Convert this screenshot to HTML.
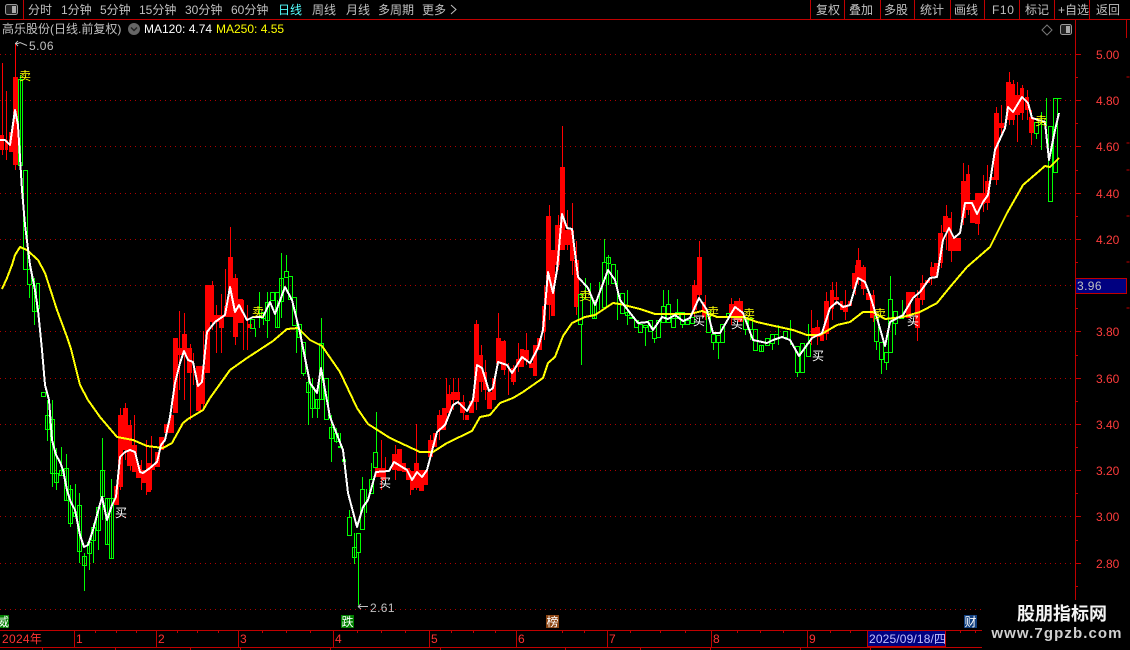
<!DOCTYPE html>
<html><head><meta charset="utf-8"><style>
html,body{margin:0;padding:0;background:#000}
svg{display:block}
text{font-family:"Liberation Sans","WenQuanYi Zen Hei",sans-serif;font-size:12px}
.n{fill:#c0c0c0}
.p{fill:#ff3c3c;font-size:13px}
.m{fill:#ff3232}
</style></head><body>
<svg width="1130" height="650" viewBox="0 0 1130 650" xmlns="http://www.w3.org/2000/svg" style="background:#000">
<!-- grid -->
<g stroke="#b00000" stroke-width="1" stroke-dasharray="1 4" shape-rendering="crispEdges">
<path d="M0 54.5H1075M0 100.5H1075M0 146.5H1075M0 193.5H1075M0 239.5H1075M0 285.5H1075M0 331.5H1075M0 378.5H1075M0 424.5H1075M0 470.5H1075M0 516.5H1075M0 563.5H1075M0 609.5H1075"/>
</g>
<!-- red wicks -->
<path shape-rendering="crispEdges" fill="none" stroke="#f00" d="M2.5 63V155M6.5 91V160M15.5 43V170M120.5 408V490M125.5 403V460M130.5 420V470M134.5 415V470M141.5 460V490M146.5 440V495M151.5 436V490M179.5 311V390M184.5 313V400M190.5 344V420M193.5 353V385M203.5 331V411M212.5 281V330M216.5 305V353M221.5 294V353M225.5 269V317M230.5 227V317M235.5 274V345M243.5 300V350M247.5 305V350M381.5 440V490M385.5 457V480M395.5 445V480M410.5 470V495M416.5 424V490M430.5 435V460M439.5 410V440M446.5 378V425M449.5 385V415M453.5 378V410M458.5 378V405M463.5 395V420M476.5 320V410M481.5 345V392M485.5 360V400M498.5 313V365M504.5 340V375M508.5 363V395M513.5 365V385M518.5 343V372M526.5 333V365M544.5 285V340M549.5 205V320M558.5 215V270M562.5 126V250M567.5 210V250M572.5 203V275M576.5 241V315M694.5 280V320M699.5 241V300M705.5 295V320M731.5 298V325M739.5 298V322M811.5 310V345M817.5 320V345M826.5 292V340M832.5 282V320M836.5 282V305M845.5 290V320M855.5 265V295M858.5 248V285M863.5 265V295M873.5 290V322M917.5 290V341M922.5 275V305M931.5 262V285M941.5 225V268M946.5 205V250M951.5 212V262M963.5 163V225M968.5 165V215M978.5 195V235M983.5 175V212M987.5 165V210M996.5 107V185M1001.5 105V135M1009.5 72V125M1013.5 80V125M1017.5 82V142M1022.5 85V120M1027.5 90V120M1031.5 110V145"/>
<!-- red bodies -->
<path shape-rendering="crispEdges" fill="#f00" d="M0 135h4V150h-4zM5 140h3V150h-3zM9 132h4V152h-4zM13 77h5V165h-5zM114 486h5V505h-5zM118 415h5V487h-5zM123 408h5V450h-5zM127 425h5V466h-5zM132 445h5V472h-5zM136 465h5V478h-5zM141 470h5V483h-5zM146 463h5V492h-5zM151 465h4V470h-4zM155 452h5V467h-5zM159 437h5V450h-5zM164 424h5V433h-5zM169 415h5V433h-5zM173 338h5V413h-5zM178 348h5V355h-5zM182 334h5V355h-5zM187 348h5V373h-5zM196 366h5V411h-5zM201 366h4V404h-4zM205 285h5V373h-5zM210 285h4V322h-4zM214 315h5V322h-5zM219 315h5V328h-5zM224 306h4V317h-4zM228 257h5V317h-5zM233 278h5V337h-5zM238 299h5V323h-5zM247 324h5V328h-5zM375 468h6V477h-6zM381 468h4V480h-4zM392 454h5V470h-5zM397 449h5V471h-5zM402 463h4V472h-4zM406 468h4V480h-4zM410 471h4V490h-4zM414 463h5V488h-5zM419 470h5V491h-5zM424 470h4V485h-4zM428 440h5V457h-5zM433 433h4V447h-4zM437 415h5V430h-5zM442 408h4V430h-4zM446 394h5V413h-5zM451 392h5V400h-5zM456 392h4V400h-4zM460 402h5V413h-5zM465 415h4V420h-4zM469 401h5V413h-5zM474 324h5V402h-5zM479 355h4V382h-4zM483 372h4V390h-4zM487 392h5V409h-5zM492 378h4V400h-4zM496 338h5V363h-5zM501 341h5V370h-5zM511 368h5V382h-5zM516 359h4V367h-4zM520 349h4V367h-4zM524 350h5V360h-5zM529 363h4V368h-4zM533 345h4V376h-4zM537 338h5V350h-5zM542 306h4V332h-4zM546 216h5V305h-5zM551 250h4V316h-4zM555 225h5V265h-5zM560 167h5V250h-5zM565 230h5V245h-5zM570 230h4V261h-4zM574 260h5V307h-5zM692 285h5V310h-5zM697 257h5V295h-5zM702 302h4V317h-4zM729 304h5V317h-5zM734 301h4V320h-4zM738 301h5V322h-5zM811 328h4V338h-4zM815 327h5V337h-5zM820 333h4V341h-4zM824 301h5V334h-5zM830 290h4V309h-4zM834 297h5V300h-5zM840 301h3V310h-3zM843 305h5V312h-5zM848 301h4V306h-4zM852 273h4V289h-4zM856 260h5V279h-5zM861 267h5V289h-5zM866 293h4V300h-4zM870 295h5V318h-5zM906 292h5V318h-5zM911 292h4V298h-4zM915 298h5V328h-5zM920 283h5V300h-5zM925 280h5V283h-5zM930 267h4V276h-4zM934 263h4V277h-4zM938 233h5V263h-5zM943 216h5V232h-5zM948 218h4V251h-4zM952 238h9V251h-9zM961 181h5V218h-5zM966 174h4V210h-4zM970 200h5V223h-5zM975 193h5V224h-5zM980 193h5V204h-5zM985 181h5V203h-5zM990 177h4V180h-4zM994 113h5V180h-5zM999 123h5V128h-5zM1006 82h5V120h-5zM1011 84h4V120h-4zM1015 95h5V115h-5zM1020 88h4V113h-4zM1025 97h4V110h-4zM1029 117h5V133h-5z"/>
<!-- green wicks -->
<path shape-rendering="crispEdges" fill="none" stroke="#0f0" d="M20.5 75V172M34.5 278V325M29.5 284V298M47.5 400V441M52.5 400V487M56.5 448V490M61.5 447V475M66.5 454V500M70.5 485V527M75.5 484V516M79.5 493V563M84.5 553V591M89.5 540V570M93.5 523V563M98.5 507V550M102.5 438V520M107.5 498V544M111.5 479V558M255.5 328V337M259.5 292V328M263.5 312V325M267.5 292V338M277.5 300V327M281.5 253V318M286.5 255V271M296.5 324V353M303.5 373V376M308.5 375V425M312.5 378V418M317.5 399V418M321.5 318V399M331.5 415V462M336.5 428V443M340.5 433V447M344.5 459V465M349.5 510V517M354.5 533V564M358.5 552V605M362.5 477V489M366.5 489V513M371.5 463V479M376.5 412V452M581.5 324V365M585.5 278V300M590.5 283V317M594.5 300V318M599.5 282V310M604.5 239V262M608.5 255V285M617.5 270V320M627.5 290V325M645.5 327V346M654.5 338V343M663.5 290V306M668.5 290V304M677.5 299V312M682.5 324V328M713.5 342V350M718.5 342V359M745.5 329V335M750.5 329V340M761.5 345V352M772.5 344V350M778.5 325V345M790.5 320V345M797.5 372V377M808.5 324V343M876.5 341V350M881.5 359V374M886.5 362V370M890.5 276V299M895.5 323V335M902.5 300V318M1036.5 133V139M1041.5 112V150M1046.5 98V126"/>
<!-- green bodies -->
<path shape-rendering="crispEdges" fill="none" stroke="#0f0" d="M18.5 79.5h4V165.5h-4zM23.5 170.5h4V269.5h-4zM27.5 269.5h4V284.5h-4zM32.5 285.5h4V311.5h-4zM36.5 283.5h3V308.5h-3zM41.5 392.5h4V396.5h-4zM45.5 415.5h4V429.5h-4zM50.5 419.5h4V473.5h-4zM54.5 473.5h4V482.5h-4zM59.5 470.5h4V475.5h-4zM64.5 468.5h4V500.5h-4zM68.5 489.5h4V523.5h-4zM73.5 512.5h4V516.5h-4zM77.5 505.5h4V551.5h-4zM82.5 556.5h4V565.5h-4zM87.5 542.5h4V553.5h-4zM91.5 527.5h4V540.5h-4zM96.5 507.5h4V530.5h-4zM100.5 470.5h4V496.5h-4zM105.5 498.5h4V544.5h-4zM109.5 498.5h4V558.5h-4zM250.5 319.5h4V328.5h-4zM261.5 312.5h4V318.5h-4zM265.5 302.5h4V320.5h-4zM270.5 292.5h4V300.5h-4zM275.5 292.5h4V327.5h-4zM279.5 278.5h4V301.5h-4zM284.5 271.5h4V277.5h-4zM288.5 276.5h4V299.5h-4zM292.5 297.5h4V325.5h-4zM297.5 324.5h4V337.5h-4zM301.5 342.5h4V373.5h-4zM306.5 382.5h4V392.5h-4zM310.5 387.5h4V408.5h-4zM315.5 399.5h4V408.5h-4zM319.5 343.5h4V399.5h-4zM324.5 378.5h4V419.5h-4zM329.5 427.5h4V438.5h-4zM334.5 433.5h4V441.5h-4zM338.5 446.5h4V447.5h-4zM342.5 459.5h3V461.5h-3zM347.5 517.5h4V535.5h-4zM352.5 547.5h4V557.5h-4zM356.5 533.5h4V552.5h-4zM360.5 489.5h4V529.5h-4zM369.5 479.5h4V493.5h-4zM373.5 452.5h4V467.5h-4zM578.5 294.5h4V324.5h-4zM592.5 300.5h4V318.5h-4zM602.5 262.5h4V307.5h-4zM606.5 257.5h4V263.5h-4zM611.5 264.5h4V283.5h-4zM620.5 293.5h4V313.5h-4zM625.5 312.5h4V315.5h-4zM629.5 317.5h4V318.5h-4zM634.5 320.5h4V327.5h-4zM638.5 324.5h4V332.5h-4zM643.5 325.5h4V327.5h-4zM648.5 320.5h4V331.5h-4zM652.5 327.5h4V338.5h-4zM656.5 320.5h4V337.5h-4zM661.5 306.5h4V322.5h-4zM666.5 304.5h4V322.5h-4zM671.5 318.5h4V327.5h-4zM675.5 312.5h4V318.5h-4zM680.5 312.5h4V324.5h-4zM685.5 320.5h4V324.5h-4zM690.5 317.5h4V323.5h-4zM706.5 311.5h4V332.5h-4zM711.5 334.5h4V342.5h-4zM716.5 335.5h4V342.5h-4zM720.5 324.5h4V342.5h-4zM726.5 313.5h3V317.5h-3zM743.5 317.5h4V329.5h-4zM748.5 318.5h4V329.5h-4zM753.5 329.5h4V350.5h-4zM759.5 345.5h4V351.5h-4zM765.5 338.5h4V345.5h-4zM770.5 334.5h4V343.5h-4zM774.5 334.5h4V338.5h-4zM783.5 331.5h4V337.5h-4zM795.5 346.5h4V372.5h-4zM800.5 343.5h4V372.5h-4zM806.5 343.5h4V356.5h-4zM874.5 315.5h4V341.5h-4zM879.5 342.5h4V359.5h-4zM884.5 352.5h4V362.5h-4zM888.5 299.5h4V352.5h-4zM893.5 311.5h4V323.5h-4zM899.5 317.5h4V318.5h-4zM1034.5 122.5h4V133.5h-4zM1048.5 126.5h4V201.5h-4zM1053.5 98.5h4V172.5h-4zM1057.5 98.5H1061.5"/>
<!-- yellow MA250 -->
<polyline fill="none" stroke="#ff0" stroke-width="2" stroke-linejoin="round" shape-rendering="crispEdges" points="2,289 7,278 12,265 15,255 20,247 27,250 38,260 45,273 57,310 67,337 71,349 80,385 88,400 100,417 117,437 133,440 147,446 163,448 172,443 183,423 188,419 203,410 210,398 230,370 247,358 273,341 287,329 298,328 310,340 322,346 340,372 357,408 368,424 390,438 420,452 433,452 447,443 472,431 480,417 490,415 500,403 513,398 523,392 543,378 548,363 555,357 563,336 572,323 585,317 595,315 613,303 620,304 640,309 655,314 690,314 702,311 717,317 743,317 757,322 770,325 793,330 807,335 820,335 837,325 850,322 863,312 873,312 885,319 903,317 920,312 937,303 950,287 967,267 990,247 1007,213 1023,185 1045,166 1050,167 1059,158"/>
<!-- white MA120 -->
<polyline fill="none" stroke="#fff" stroke-width="2" stroke-linejoin="round" shape-rendering="crispEdges" points="0,140 5,140 10,145 15,110 18,125 22,190 25,225 30,265 35,290 38,310 42,350 45,385 49,400 52,440 56,455 60,462 63,470 67,490 70,500 75,510 80,535 84,547 88,545 93,530 97,515 102,497 107,520 112,505 116,497 120,457 125,452 130,450 135,452 140,472 143,473 150,468 157,462 161,445 165,440 170,417 175,383 180,363 184,351 188,360 193,362 198,386 202,382 207,332 215,322 225,315 230,287 235,312 239,305 247,320 253,317 263,317 270,302 275,314 285,287 292,300 300,333 310,383 317,393 321,368 330,417 343,450 348,493 357,527 363,507 368,500 376,472 389,471 394,462 407,470 412,480 417,472 422,477 427,470 437,432 445,425 453,405 458,402 467,411 473,400 477,365 482,368 489,391 493,388 498,362 507,365 512,373 522,357 530,363 538,348 543,330 548,272 553,293 557,270 562,214 567,228 572,229 578,277 588,288 595,305 608,270 615,280 620,300 638,323 648,322 653,330 662,317 668,319 675,315 683,321 690,318 699,298 707,310 713,333 720,333 735,307 743,313 753,340 767,343 773,340 782,337 790,340 799,356 812,338 822,333 830,308 837,302 843,307 850,305 858,278 865,282 870,295 877,318 885,346 890,322 903,315 913,298 920,292 930,278 937,277 943,240 949,228 954,238 960,233 965,203 972,203 977,214 983,202 988,195 995,150 1005,128 1008,107 1013,112 1022,97 1028,103 1032,118 1045,122 1049,160 1055,130 1059,113"/>
<!-- buy/sell -->
<g fill="#ff0">
<text x="19" y="80">卖</text><text x="252" y="316">卖</text><text x="579" y="300">卖</text><text x="707" y="316">卖</text><text x="743" y="318">卖</text><text x="874" y="318">卖</text><text x="1035" y="125">卖</text>
</g>
<g fill="#fff">
<text x="115" y="517">买</text><text x="379" y="487">买</text><text x="693" y="325">买</text><text x="731" y="328">买</text><text x="812" y="360">买</text><text x="907" y="325">买</text>
</g>
<!-- hi/lo marks -->
<path d="M15 43.5H18L20 42.5L27 45.5M15.5 43.5L18 41M15.5 43.5L18 46" stroke="#c0c0c0" fill="none"/>
<text class="n" x="29" y="50" style="letter-spacing:.4px">5.06</text>
<path d="M358 606.5H368M358 606.5L361 604M358 606.5L361 609" stroke="#c0c0c0" fill="none"/>
<text class="n" x="370" y="612" style="letter-spacing:.4px">2.61</text>
<!-- top bar -->
<g shape-rendering="crispEdges" stroke="#c00000" fill="none">
<path d="M0 19.5H1130M23.5 0V19M810.5 0V19M844.5 0V19M880.5 0V19M914.5 0V19M950.5 0V19M984.5 0V19M1019.5 0V19M1054.5 0V19M1089.5 0V19"/>
<path d="M1075.5 19V600M1126.5 19V38"/>
</g>
<rect x="5.5" y="4.5" width="12" height="10" rx="2" fill="#222" stroke="#999"/><rect x="12" y="6" width="4" height="7" fill="#aaa"/>
<g class="n" style="fill:#c0c0c0">
<text x="28" y="14">分时</text><text x="61" y="14">1分钟</text><text x="100" y="14">5分钟</text><text x="139" y="14">15分钟</text><text x="185" y="14">30分钟</text><text x="231" y="14">60分钟</text>
<text x="278" y="14" style="fill:#55ffff">日线</text>
<text x="312" y="14">周线</text><text x="346" y="14">月线</text><text x="378" y="14">多周期</text><text x="422" y="14">更多</text>
<text x="816" y="14">复权</text><text x="849" y="14">叠加</text><text x="884" y="14">多股</text><text x="920" y="14">统计</text><text x="954" y="14">画线</text><text x="992" y="14" style="letter-spacing:.6px">F10</text><text x="1025" y="14">标记</text><text x="1058" y="14">+自选</text><text x="1096" y="14">返回</text>
</g>
<path d="M451 5L456 9.5L451 14" stroke="#c0c0c0" fill="none"/>
<!-- title line -->
<text class="n" x="2" y="33">高乐股份(日线.前复权)</text>
<circle cx="134" cy="29" r="6" fill="#666"/><path d="M131 27.5L134 30.5L137 27.5" stroke="#222" stroke-width="1.5" fill="none"/>
<text x="144" y="33" fill="#fff">MA120: 4.74</text>
<text x="216" y="33" fill="#ff0">MA250: 4.55</text>
<path d="M1047 25L1052 30L1047 35L1042 30Z" fill="none" stroke="#777"/>
<rect x="1060.5" y="24.5" width="11" height="10" rx="2" fill="#222" stroke="#999"/><rect x="1066" y="26" width="4" height="7" fill="#aaa"/>
<!-- price axis -->
<g stroke="#c00000" shape-rendering="crispEdges" fill="none">
<path d="M1075 54.5h6M1075 77.5h3M1075 100.5h6M1075 123.5h3M1075 146.5h6M1075 170.5h3M1075 193.5h6M1075 216.5h3M1075 239.5h6M1075 262.5h3M1075 308.5h3M1075 331.5h6M1075 355.5h3M1075 378.5h6M1075 401.5h3M1075 424.5h6M1075 447.5h3M1075 470.5h6M1075 493.5h3M1075 516.5h6M1075 540.5h3M1075 563.5h6M1075 586.5h3"/>
<path d="M1126.5 77h3M1126.5 143h3M1126.5 170h3M1126.5 216h3M1126.5 262h3M1126.5 308h3"/>
</g>
<g class="p">
<text x="1096" y="59">5.00</text><text x="1096" y="105">4.80</text><text x="1096" y="151">4.60</text><text x="1096" y="198">4.40</text><text x="1096" y="244">4.20</text><text x="1096" y="336">3.80</text><text x="1096" y="383">3.60</text><text x="1096" y="429">3.40</text><text x="1096" y="475">3.20</text><text x="1096" y="521">3.00</text><text x="1096" y="568">2.80</text>
</g>
<rect x="1075.5" y="278.5" width="51" height="15" fill="#000080" stroke="#c00000" shape-rendering="crispEdges"/>
<text x="1077" y="290" fill="#c0c0c0" style="font-size:12px;letter-spacing:.4px">3.96</text>
<!-- badges -->
<rect x="0" y="615" width="9" height="13" fill="#008000"/>
<svg x="0" y="615" width="9" height="13"><text x="-3" y="11" fill="#fff">威</text></svg>
<rect x="341" y="615" width="13" height="13" fill="#008000"/><text x="341.5" y="626" fill="#fff">跌</text>
<rect x="546" y="615" width="13" height="13" fill="#8b4513"/><text x="546.5" y="626" fill="#fff">榜</text>
<rect x="964" y="615" width="13" height="13" fill="#104080"/><text x="964.5" y="626" fill="#fff">财</text>
<!-- bottom axis -->
<g stroke="#c00000" shape-rendering="crispEdges" fill="none">
<path d="M0 630.5H1075M0 647.5H1075M74.5 631V647M156.5 631V647M238.5 631V647M333.5 631V647M429.5 631V647M516.5 631V647M607.5 631V647M711.5 631V647M807.5 631V647"/>
<path d="M95.5 631v2M116.5 631v2M136.5 631v2M177.5 631v2M197.5 631v2M218.5 631v2M262.5 631v2M286.5 631v2M310.5 631v2M357.5 631v2M381.5 631v2M405.5 631v2M451.5 631v2M473.5 631v2M495.5 631v2M562.5 631v2M584.5 631v2M630.5 631v2M660.5 631v2M685.5 631v2M737.5 631v2M760.5 631v2M783.5 631v2M830.5 631v2M850.5 631v2M960.5 631v2M975.5 631v2"/>
<path d="M42.5 647v3M115.5 647v3M190.5 647v3M240.5 647v3M330.5 647v3M440.5 647v3M565.5 647v3M640.5 647v3M710.5 647v3M800.5 647v3M870.5 647v3"/>
</g>
<g class="m">
<text x="2" y="643" style="letter-spacing:.3px">2024年</text><text x="76" y="643">1</text><text x="158" y="643">2</text><text x="240" y="643">3</text><text x="335" y="643">4</text><text x="431" y="643">5</text><text x="518" y="643">6</text><text x="609" y="643">7</text><text x="713" y="643">8</text><text x="809" y="643">9</text>
</g>
<rect x="867.5" y="630.5" width="78" height="16" fill="#000080" stroke="#c00000" shape-rendering="crispEdges"/>
<text x="869" y="643" fill="#c0c0ff" style="letter-spacing:.15px">2025/09/18/四</text>
<!-- watermark -->
<rect x="982" y="601" width="148" height="49" fill="#000"/>
<text x="1062" y="620" text-anchor="middle" fill="#f4f4f4" style="font-size:18px;font-weight:bold;font-family:'Liberation Sans','Noto Sans CJK SC',sans-serif">股朋指标网</text>
<text x="1057" y="638" text-anchor="middle" fill="#d0d0d0" style="font-size:15px;font-weight:bold;letter-spacing:1.1px">www.7gpzb.com</text>
</svg>
</body></html>
